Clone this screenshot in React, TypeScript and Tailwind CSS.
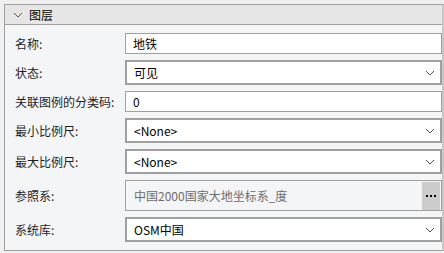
import React from "react";

const Chevron = ({ className = "" }: { className?: string }) => (
  <svg width="10" height="6" viewBox="0 0 10 6" className={className} fill="none">
    <path d="M1 1 L5 5 L9 1" stroke="#555" strokeWidth="1" />
  </svg>
);

const Label = ({ children }: { children: React.ReactNode }) => (
  <div className="w-[110px] shrink-0 text-[12px] text-[#1e1e1e] leading-none">{children}</div>
);

const TextRow = ({ label, value }: { label: string; value: string }) => (
  <div className="flex items-center">
    <Label>{label}</Label>
    <div className="flex-1 h-[21px] border border-[#a0a0a0] bg-white flex items-center pl-[7px] text-[12px] text-black">
      {value}
    </div>
  </div>
);

const SelectRow = ({ label, value }: { label: string; value: string }) => (
  <div className="flex items-center">
    <Label>{label}</Label>
    <div className="flex-1 h-[25px] border-2 border-[#a0a0a0] bg-white flex items-center justify-between pl-[7px] pr-[5px] text-[12px] text-black">
      <span>{value}</span>
      <Chevron />
    </div>
  </div>
);

export default function App() {
  return (
    <div className="w-[444px] h-[253px] bg-[#f0f0f0] pt-[4px] pl-[4px] font-['Noto_Sans_CJK_SC','Noto_Sans',sans-serif]">
      <div className="h-[247px] border-l border-t border-b border-[#a0a0a0] border-r-2 border-r-[#c8c8c8] bg-[#f4f5f7] flex flex-col">
        <div className="h-[20px] shrink-0 bg-[#e6e6e6] border-b border-[#a0a0a0] flex items-center pl-[8px]">
          <Chevron />
          <span className="ml-[6px] text-[12px] text-black leading-none">图层</span>
        </div>
        <div className="flex flex-col gap-[6px] pt-[8px] pl-[10px]">
          <TextRow label="名称:" value="地铁" />
          <SelectRow label="状态:" value="可见" />
          <TextRow label="关联图例的分类码:" value="0" />
          <SelectRow label="最小比例尺:" value="<None>" />
          <SelectRow label="最大比例尺:" value="<None>" />
          <div className="flex items-center">
            <Label>参照系:</Label>
            <div className="flex-1 h-[31px] border border-[#a0a0a0] bg-[#f4f5f7] flex items-center justify-between pl-[8px] pr-[1px] text-[12px] text-[#6d6d6d]">
              <span>中国2000国家大地坐标系_度</span>
              <div className="w-[18px] h-[28px] bg-[#cccccc] flex items-center justify-center gap-[2px]">
                <span className="w-[2px] h-[2px] bg-black" />
                <span className="w-[2px] h-[2px] bg-black" />
                <span className="w-[2px] h-[2px] bg-black" />
              </div>
            </div>
          </div>
          <SelectRow label="系统库:" value="OSM中国" />
        </div>
      </div>
    </div>
  );
}
